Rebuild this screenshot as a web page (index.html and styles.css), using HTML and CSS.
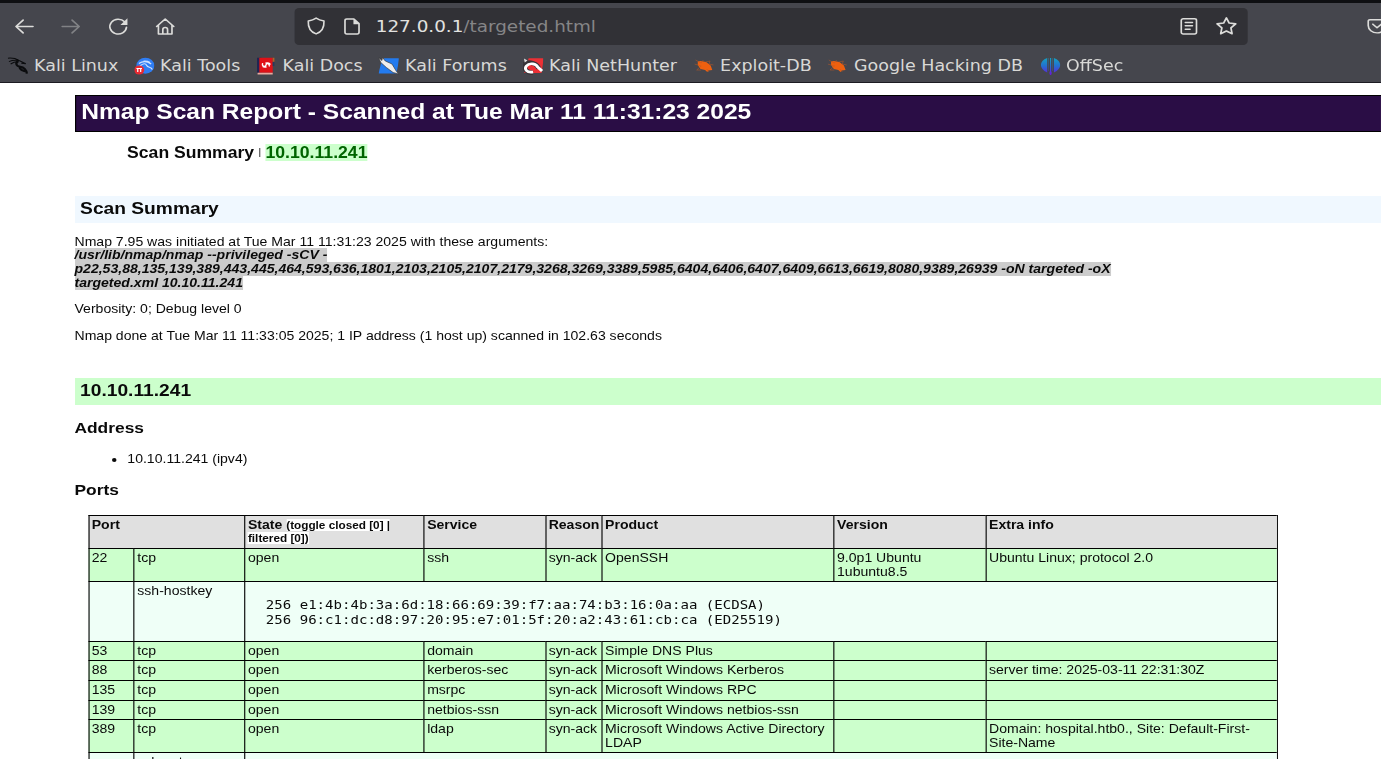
FILE: index.html
```
<!DOCTYPE html>
<html lang="en">
<head>
<meta charset="utf-8">
<title>Nmap Scan Report</title>
<link rel="stylesheet" href="styles.css">
</head>
<body>
<div class="window">
  <header class="chrome">
    <div class="toolbar">
      <nav class="nav">
        <svg class="ico" viewBox="0 0 16 16"><path d="M15.5 8H1.2M7.2 2 1.2 8l6 6"/></svg>
        <svg class="ico dim" viewBox="0 0 16 16"><path d="M.5 8h14.3M8.8 2l6 6-6 6"/></svg>
        <svg class="ico" viewBox="0 0 16 16"><path d="M13.4 3.6A7 7 0 1 0 15 8.6"/><path class="fill" d="M15.8.2v6.3H9.9z"/></svg>
        <svg class="ico" viewBox="0 0 16 16"><path d="M.8 8 8 .9 15.2 8M2.300 6.800v8.300h11.400V6.800M6 15v-4a2 2 0 0 1 4 0v4"/></svg>
      </nav>
      <div class="urlbar">
        <svg class="ico shield" viewBox="0 0 16 16"><path d="M8 .3c2 1.500 4.200 2.300 6.800 2.800C15.100 9 13 13.600 8 15.700 3 13.600.9 9 1.200 3.100 3.800 2.600 6 1.800 8 .3z"/></svg>
        <svg class="ico page" viewBox="0 0 16 16"><path d="M3.400 1h6l4.300 4.300v8.200a1.500 1.500 0 0 1-1.500 1.500H3.400a1.500 1.500 0 0 1-1.500-1.500v-11A1.500 1.500 0 0 1 3.400 1z"/><path class="fill" d="M9 1v4.900h4.900z"/></svg>
        <div class="url"><b>127.0.0.1</b>/targeted.html</div>
        <svg class="ico" viewBox="0 0 16 16"><rect x="1.600" y=".7" width="12.800" height="14.300" rx="1.600"/><path d="M5 4.300h6M5 7.400h6M5 10.600h4"/></svg>
        <svg class="ico star" viewBox="0 0 16 16"><path d="m8 .8 2.200 4.600 5.200.7-3.800 3.600.9 5.200L8 12.500l-4.500 2.400.9-5.200L.6 6.100l5.200-.7z"/></svg>
      </div>
      <svg class="ico pocket" viewBox="0 0 16 16"><path d="M2 1.600h12a1.400 1.400 0 0 1 1.400 1.400v4a7.400 7 0 0 1-14.800 0V3A1.400 1.400 0 0 1 2 1.600zM4.500 5.800 8 9.200l3.500-3.400"/></svg>
    </div>
    <div class="bookmarks">
      <a><svg viewBox="0 0 18 18"><path fill="none" stroke="#0b0c0e" stroke-width="1" d="M0 1.200c4-.4 7 .2 10 2.300l6 3.200-4-.4M1 4.600c3-1.600 6-1.600 9-1.100M2.500 7c2.500-1.800 4-2.300 6-2.300"/><path fill="none" stroke="#0b0c0e" stroke-width="2" d="M9.500 4c-3 1.500-2.500 5 1.500 5.700 3.500.6 5.500 3 6 7M10.500 9.500c0 4 2.500 3.500 5 5"/></svg>Kali Linux</a>
      <a><svg viewBox="0 0 18 18"><circle cx="9.800" cy="8.700" r="8" fill="#2f7df3"/><path fill="none" stroke="#cfe2ff" stroke-width="1.100" d="M4 6.500c4-3 7-2.500 11 .5M5 9c3-3 5-3 6-.5s4 1 5 4M8 4.200c3-.3 4 0 6 1.300"/><circle cx="4.300" cy="13" r="4.500" fill="#e82a32"/><path fill="none" stroke="#fff" stroke-width="1.100" d="M1.800 11.500h5M3 11.500V15M5.600 11.500V15"/></svg>Kali Tools</a>
      <a><svg viewBox="0 0 18 18"><path fill="#222452" d="M.5.8h4v15h-4z"/><path fill="#df1117" d="M2.500.8h12v15h-12z"/><path fill="#e8aaa0" d="M1 15.800h13.500v1.700H1z"/><path fill="#ad6428" d="M14.500.8H16v4h-1.500z"/><path fill="#26395f" d="M14.500 5H16v4h-1.500z"/><path fill="none" stroke="#fff" stroke-width="1.200" d="M5.500 6.200c-1 3.500 2.500 4 3 1.800s3.200-1.500 3 1.500M8 6.200c2.500-.6 4 0 4.300 1.500M5.500 9.500c1 .8 2 .8 3.500.4"/></svg>Kali Docs</a>
      <a><svg viewBox="0 0 18 18"><path fill="#237bef" d="M5 1.200h13.500L16 16.500H0L2.500 5z"/><path fill="#eee" stroke="#333" stroke-width=".6" d="m0 .5 3 3 .5-3L6 4l6 3 4 7.500 2 2.500-5-1.500-6-5L2 5.500z"/></svg>Kali Forums</a>
      <a><svg viewBox="0 0 18 18"><path fill="#ec3035" d="M5 1.200h13.500L16.500 16H1z"/><path fill="none" stroke="#383338" stroke-width="4.500" d="M1 7C5 4 13 6 14 12M2 7c-2 5 2 9 7 9"/><path fill="none" stroke="#fff" stroke-width="2.700" d="M9 15C3 16 1 12 3 9c3-4 9-2 10 1l4 4"/><path fill="#ddd" d="m.8 1.500 3.200 2-2.500 2z"/></svg>Kali NetHunter</a>
      <a><svg viewBox="0 0 18 18"><path fill="#ee600f" d="m3 4.500 2.500-.6 5 1.100 4 3.600L16 13l-3.500.5-1 1.500-2-2-4-1L3 8z"/><path stroke="#ba5927" stroke-width=".5" fill="none" d="m1 3 5 3 2-3M0 7l6 2-4 4h4M10 5l4-1-1 3 4 1M11 12l2 3"/></svg>Exploit-DB</a>
      <a><svg viewBox="0 0 18 18"><path fill="#ee600f" d="m3 4.500 2.500-.6 5 1.100 4 3.600L16 13l-3.500.5-1 1.500-2-2-4-1L3 8z"/><path stroke="#ba5927" stroke-width=".5" fill="none" d="m1 3 5 3 2-3M0 7l6 2-4 4h4M10 5l4-1-1 3 4 1M11 12l2 3"/></svg>Google Hacking DB</a>
      <a><svg viewBox="0 0 18 18"><defs><linearGradient id="os" x1="0" y1="0" x2="0" y2="18" gradientUnits="userSpaceOnUse"><stop stop-color="#12a8c0"/><stop offset=".5" stop-color="#246fd0"/><stop offset="1" stop-color="#6915df"/></linearGradient></defs><path fill="url(#os)" d="M6 1v14.500C-1.500 12-1.500 4 6 1zM12 1v14.500c7.500-3.500 7.500-11.500 0-14.500z"/><path fill="url(#os)" opacity=".5" d="M7 1h.6v13H7zM10.400 1h.6v13h-.6z"/><path fill="url(#os)" d="M8.500 1h1v13l.6 2-.6 2h-1l-.6-2 .6-2z"/></svg>OffSec</a>
    </div>
  </header>

  <main class="report">
    <h1>Nmap Scan Report - Scanned at Tue Mar 11 11:31:23 2025</h1>
    <div class="menu"><b>Scan Summary</b><span class="bar">|</span><b class="up">10.10.11.241</b></div>
    <h2 class="summary">Scan Summary</h2>
    <p>Nmap 7.95 was initiated at Tue Mar 11 11:31:23 2025 with these arguments:<br>
      <span class="command">/usr/lib/nmap/nmap --privileged -sCV -<br>p22,53,88,135,139,389,443,445,464,593,636,1801,2103,2105,2107,2179,3268,3269,3389,5985,6404,6406,6407,6409,6613,6619,8080,9389,26939 -oN targeted -oX<br>targeted.xml 10.10.11.241</span></p>
    <p>Verbosity: 0; Debug level 0</p>
    <p>Nmap done at Tue Mar 11 11:33:05 2025; 1 IP address (1 host up) scanned in 102.63 seconds</p>
    <h2 class="host">10.10.11.241</h2>
    <h3>Address</h3>
    <ul><li>10.10.11.241 (ipv4)</li></ul>
    <h3>Ports</h3>
    <div class="ports">
      <div class="row head"><div class="two">Port</div><div>State <small>(toggle closed [0] |<br>filtered [0])</small></div><div>Service</div><div>Reason</div><div>Product</div><div>Version</div><div>Extra info</div></div>
      <div class="row tall"><div>22</div><div>tcp</div><div>open</div><div>ssh</div><div>syn-ack</div><div>OpenSSH</div><div>9.0p1 Ubuntu<br>1ubuntu8.5</div><div>Ubuntu Linux; protocol 2.0</div></div>
      <div class="row script"><div></div><div>ssh-hostkey</div><div class="rest"><pre>256 e1:4b:4b:3a:6d:18:66:69:39:f7:aa:74:b3:16:0a:aa (ECDSA)
256 96:c1:dc:d8:97:20:95:e7:01:5f:20:a2:43:61:cb:ca (ED25519)</pre></div></div>
      <div class="row"><div>53</div><div>tcp</div><div>open</div><div>domain</div><div>syn-ack</div><div>Simple DNS Plus</div><div></div><div></div></div>
      <div class="row"><div>88</div><div>tcp</div><div>open</div><div>kerberos-sec</div><div>syn-ack</div><div>Microsoft Windows Kerberos</div><div></div><div>server time: 2025-03-11 22:31:30Z</div></div>
      <div class="row"><div>135</div><div>tcp</div><div>open</div><div>msrpc</div><div>syn-ack</div><div>Microsoft Windows RPC</div><div></div><div></div></div>
      <div class="row"><div>139</div><div>tcp</div><div>open</div><div>netbios-ssn</div><div>syn-ack</div><div>Microsoft Windows netbios-ssn</div><div></div><div></div></div>
      <div class="row tall"><div>389</div><div>tcp</div><div>open</div><div>ldap</div><div>syn-ack</div><div>Microsoft Windows Active Directory<br>LDAP</div><div></div><div>Domain: hospital.htb0., Site: Default-First-<br>Site-Name</div></div>
      <div class="row script"><div></div><div>ssl-cert</div><div class="rest"></div></div>
    </div>
  </main>
</div>
</body>
</html>
```
FILE: styles.css
```
* { box-sizing: border-box; }
html, body { margin: 0; height: 759px; overflow: hidden; background: #fff; }

.window {
  width: 1233.04px;
  height: 759px;
  overflow: hidden;
  transform: scaleX(1.12);
  transform-origin: 0 0;
  color: #0a0a0a;
  font: 12.55px/13.8px "Liberation Sans", Arial, sans-serif;
}

/* Browser chrome */
.chrome {
  height: 83px;
  background: #45464d;
  border-top: 3px solid #0e0f12;
  border-bottom: 1px solid #1c1b22;
  color: #d8d8d6;
  font-family: "DejaVu Sans", sans-serif;
}
.toolbar { display: flex; align-items: center; height: 46px; white-space: nowrap; }
.nav { display: flex; gap: 25px; width: 262.5px; padding-left: 12.6px; flex: none; }
.ico { width: 17px; height: 17px; flex: none; fill: none; stroke: #dcdcda; stroke-width: 1.4; stroke-linejoin: round; stroke-linecap: round; overflow: visible; }
.ico .fill { fill: #dcdcda; stroke: none; }
.dim { opacity: .4; }
.urlbar { display: flex; align-items: center; width: 851px; height: 37px; padding: 0 9.5px 0 11px; border-radius: 4px; background: #313136; flex: none; }
.shield { width: 16.5px; height: 18px; }
.page { margin-left: 16px; }
.url { flex: 1; margin-left: 12.5px; padding-top: 1px; color: #858587; font-size: 16.4px; line-height: 24px; }
.url b { font-weight: 400; color: #e2e2e0; }
.star { width: 18px; height: 18px; margin-left: 16px; }
.pocket { margin-left: 107px; }
.bookmarks { display: flex; padding: 0 0 0 7.1px; height: 33px; align-items: center; font-size: 15.62px; }
.bookmarks a { display: flex; align-items: center; flex: none; width: 112.5px; line-height: 24px; white-space: nowrap; }
.bookmarks svg { width: 18px; height: 18px; margin-right: 5.3px; flex: none; }
.bookmarks a:nth-child(2) { width: 109.4px; }
.bookmarks a:nth-child(3) { width: 109.4px; }
.bookmarks a:nth-child(4) { width: 128.6px; }
.bookmarks a:nth-child(5) { width: 152.7px; }
.bookmarks a:nth-child(6) { width: 119.6px; }
.bookmarks a:nth-child(7) { width: 189.3px; }

/* Report */
.report { padding: 12px 0 0 66.5px; white-space: nowrap; }
h1, h2, h3, p, ul, pre { margin: 0; }
h1 { height: 37px; padding-left: 5px; border: 1px solid #000; border-right: 0; background: #2a0d45; color: #fff; font-size: 21.94px; line-height: 31px; }
.menu { display: flex; margin: 12px 0 35px 47px; height: 17px; font-size: 15.7px; line-height: 17px; }
.menu .bar { margin: 0 3.8px 0 4px; font-size: 9px; line-height: 17px; }
.up { background: #cfc; color: #006400; height: 17px; font-size: 15.75px; }
h2 { height: 27px; padding-left: 5px; font-size: 17.15px; line-height: 25px; }
.summary { margin-bottom: 12.5px; background: #f0f8ff; }
p { margin-bottom: 12.6px; }
.command { background: #ccc; font-weight: 700; font-style: italic; }
.host { margin-top: 35px; background: #cfc; }
h3 { font-size: 15.5px; line-height: 18px; margin-top: 14px; }
ul { margin-top: 15.5px; padding-left: 47.2px; }
ul + h3 { margin-top: 14px; }
h3 + .ports { margin-top: 16px; }
.ports { width: 1062px; margin-left: 12.4px; border: 1px solid #000; border-left: 0; border-top: 0; }

.row {
  display: grid;
  grid-template-columns: 39.7px 99.8px 160px 108.5px 50.4px 207.1px 135.7px 1fr;
  height: 19.6px;
  background: #cfc;
}
.row > div { border-left: 1px solid #000; border-top: 1px solid #000; padding: 2.9px 0 0 2px; }
.row > div:nth-child(2) { padding-left: 3px; }
.head { height: 33.3px; background: #e0e0e0; font-weight: 700; }
.head > div:nth-child(2) { padding-left: 2px; }
.head .two { grid-column: span 2; }
.head small { font-size: 10.5px; background: #fff; }
.tall { height: 33.2px; }
.script { height: 59.6px; background: #effff7; }
.script .rest { grid-column: span 6; }
.script pre { padding: 12.1px 0 0 16px; font: 12.55px/15px "DejaVu Sans Mono", monospace; }
```
